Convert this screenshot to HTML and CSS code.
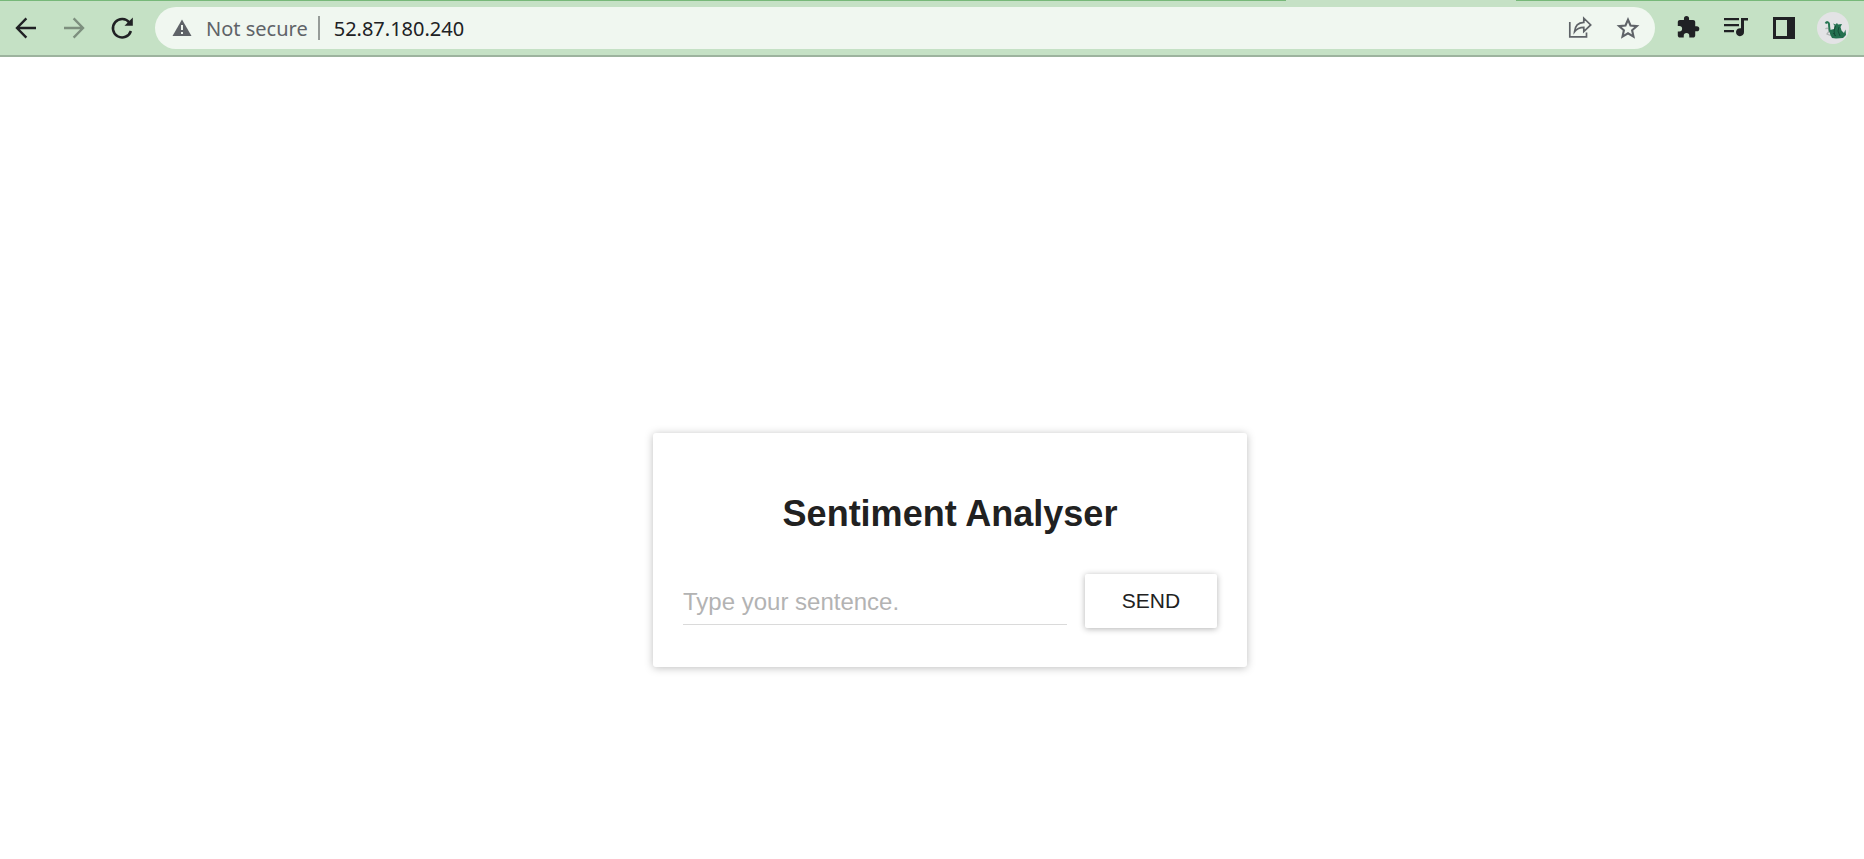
FILE: index.html
```
<!DOCTYPE html>
<html lang="en">
<head>
<meta charset="utf-8">
<title>Sentiment Analyser</title>
<link rel="stylesheet" href="styles.css">
</head>
<body>
<header class="toolbar">
  <span class="active-tab"></span>
  <button class="tool" aria-label="Back"><svg viewBox="0 0 24 24"><path d="M20 12H5M12.300 4.300L4.800 12l7.500 7.700" fill="none" stroke="currentColor" stroke-width="1.900"/></svg></button>
  <button class="tool tool-disabled" aria-label="Forward"><svg viewBox="0 0 24 24"><path d="M4 12h15M11.700 4.300L19.200 12l-7.500 7.700" fill="none" stroke="currentColor" stroke-width="1.900"/></svg></button>
  <button class="tool" aria-label="Reload"><svg viewBox="0 0 30 30"><path d="M22.500 9.700A9.200 9.200 0 1 0 23.900 18" fill="none" stroke="currentColor" stroke-width="2.500"/><path d="M25.800 4.500v8.300h-8.300z"/></svg></button>
  <div class="address">
    <svg class="warning" viewBox="0 0 22 22"><path d="M11 2.500L20.500 19H1.500z"/><path class="warning-mark" d="M10 8h2v5h-2zM10 15h2v2h-2z"/></svg>
    <span class="security">Not secure</span>
    <span class="divider"></span>
    <input class="url" type="text" aria-label="Address" value="52.87.180.240">
    <button class="tool tool-muted" aria-label="Share"><svg viewBox="0 0 30 30"><path d="M4.800 9v14.800h16.700V19.500M9.500 18.800C10 13 13 9.700 18.800 9.400V5.200l6.900 6.700-6.900 6.600v-4.200c-4.200 0-7 1.300-9.300 4.500z" fill="none" stroke="currentColor" stroke-width="1.700"/></svg></button>
    <button class="tool tool-muted" aria-label="Bookmark"><svg viewBox="0 0 30 30"><path d="M15 6.600l2.500 5.900 6.400.6-4.800 4.200 1.400 6.300-5.500-3.300-5.500 3.300 1.400-6.300-4.800-4.200 6.400-.6z" fill="none" stroke="currentColor" stroke-width="2.100"/></svg></button>
  </div>
  <button class="tool" aria-label="Extensions"><svg viewBox="0 0 24 24"><path d="M20.500 11H19V7c0-1.100-.9-2-2-2h-4V3.500a2.500 2.500 0 0 0-5 0V5H4c-1.100 0-2 .9-2 2v3.800h1.500a2.700 2.700 0 0 1 0 5.400H2V20c0 1.100.9 2 2 2h3.800v-1.500a2.700 2.700 0 0 1 5.400 0V22H17c1.100 0 2-.9 2-2v-4h1.500a2.500 2.500 0 0 0 0-5z" transform="translate(2.200 1.500) scale(.82)"/></svg></button>
  <button class="tool" aria-label="Media controls"><svg viewBox="0 0 30 30"><path d="M3 5h15v2.200H3zM3 11h15v2.200H3zM3 17h10v2.200H3z"/><path d="M20 5h7v2.500h-4v11.500a4 4 0 1 1-3-3.700z"/></svg></button>
  <button class="tool" aria-label="Side panel"><svg viewBox="0 0 30 30"><path fill-rule="evenodd" d="M4 4h22v22H4zM7 7v16h11V7z"/></svg></button>
  <button class="avatar" aria-label="Profile"><svg viewBox="0 0 32 32"><circle cx="16" cy="16" r="16" fill="#e3e3e5"/><path d="M8.500 17c2-2 4 0 3.500 2s-2 2-2 3l5 2" fill="none" stroke="#b0b5b4" stroke-width="1.300"/><path d="M8.600 11.500c1-2 3-1.800 3.400.5.400 3-.5 6 2 9" fill="none" stroke="#287653" stroke-width="2"/><path d="M13 18l4-1 .5-3.500-1.500-2 2.500 1L20 11l1 1.500 4-.5-1.500 3 1 3.500L27 21l1.500-3.500L29 23l-3 3-7 .5-4-.5-2-4z" fill="#24704f"/><path d="M18.500 14l-1.500 5 1 5m4-9l-1 4 2 5m-7-3l3 3" fill="none" stroke="#154d37" stroke-width="1"/></svg></button>
</header>
<main class="page">
  <form class="card">
    <h1 class="title">Sentiment Analyser</h1>
    <div class="row">
      <input class="sentence" type="text" aria-label="Sentence" placeholder="Type your sentence.">
      <button class="send" type="button">SEND</button>
    </div>
  </form>
</main>
</body>
</html>
```
FILE: styles.css
```
* { box-sizing: border-box; }

body {
  margin: 0;
  background: #fff;
  color: #212121;
  font-family: "Liberation Sans", Arial, sans-serif;
}

button, input {
  margin: 0;
  padding: 0;
  border: 0;
  background: none;
  color: inherit;
  font: inherit;
}

.toolbar {
  position: relative;
  display: flex;
  align-items: center;
  gap: 18px;
  padding: 6px 15px 6px 11px;
  border-top: 1px solid #77b879;
  border-bottom: 2px solid #9db39e;
  background: #c5e1c5;
  color: #202124;
  font-family: "Noto Sans", sans-serif;
  font-size: 20px;
}

.active-tab {
  position: absolute;
  top: -1px;
  left: 69%;
  width: 230px;
  height: 1px;
  background: #c5e1c5;
}

.tool {
  flex: none;
  width: 30px;
  height: 30px;
}

.tool svg, .avatar svg {
  display: block;
  width: 100%;
  height: 100%;
  fill: currentColor;
}

.tool-disabled { color: #7d8f7e; }
.tool-muted { color: #5f6368; }

.address {
  flex: 1;
  display: flex;
  align-items: center;
  height: 42px;
  padding: 0 12px 0 16px;
  border-radius: 21px;
  background: #f0f7f0;
}

.warning {
  flex: none;
  width: 22px;
  height: 22px;
  margin-right: 13px;
  fill: #5f6368;
}

.warning-mark { fill: #f0f7f0; }

.security { color: #5f6368; }

.divider {
  width: 2px;
  height: 24px;
  margin: 0 14px 0 10px;
  background: #969c98;
}

.url {
  flex: 1;
  min-width: 0;
  height: 30px;
}

.address .tool + .tool { margin-left: 18px; }

.avatar {
  flex: none;
  width: 32px;
  height: 32px;
}

.page {
  display: flex;
  justify-content: center;
  padding: 376px 0 24px 36px;
}

.card {
  width: 594px;
  padding: 60px 30px 39px;
  border-radius: 3px;
  box-shadow: 0 1px 8px rgba(0, 0, 0, 0.26);
}

.title {
  margin: 0 0 39px;
  font-size: 36px;
  line-height: 42px;
  text-align: center;
}

.row {
  display: flex;
  align-items: flex-start;
  gap: 18px;
}

.sentence {
  flex: 1;
  min-width: 0;
  height: 51px;
  padding-top: 6px;
  border-bottom: 1px solid #dadada;
  font-size: 24px;
}

.sentence::placeholder { color: #b3b3b3; opacity: 1; }

.send {
  width: 132px;
  height: 54px;
  border-radius: 2px;
  box-shadow: 0 1px 6px rgba(0, 0, 0, 0.3);
  font-size: 21px;
}
```
